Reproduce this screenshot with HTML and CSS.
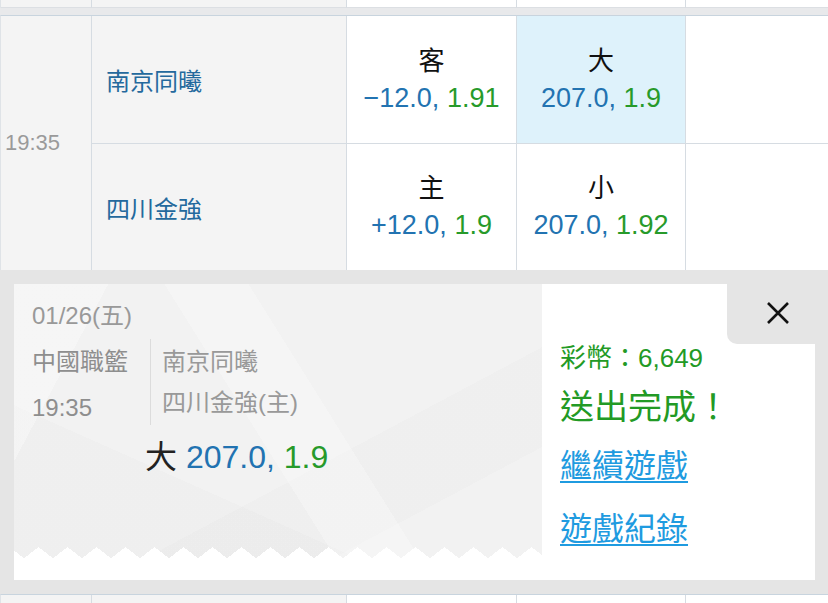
FILE: index.html
```html
<!DOCTYPE html>
<html lang="zh-Hant">
<head>
    <meta charset="UTF-8">
    <meta name="viewport" content="width=device-width, initial-scale=1.0">
    <title>投注完成</title>
    <link rel="stylesheet" href="styles.css">
</head>
<body>
    <div class="board">
        <div class="match match-edge">
            <div class="cell shade"></div>
            <div class="cell shade"></div>
            <div class="cell"></div>
            <div class="cell"></div>
            <div class="cell last"></div>
        </div>

        <div class="match">
            <div class="cell shade time">19:35</div>
            <div class="cell shade team top">南京同曦</div>
            <div class="cell odds top">
                <span class="pick">客</span>
                <span><span class="line">−12.0,</span> <span class="price">1.91</span></span>
            </div>
            <div class="cell odds top picked">
                <span class="pick">大</span>
                <span><span class="line">207.0,</span> <span class="price">1.9</span></span>
            </div>
            <div class="cell last top"></div>

            <div class="cell shade team">四川金強</div>
            <div class="cell odds">
                <span class="pick">主</span>
                <span><span class="line">+12.0,</span> <span class="price">1.9</span></span>
            </div>
            <div class="cell odds">
                <span class="pick">小</span>
                <span><span class="line">207.0,</span> <span class="price">1.92</span></span>
            </div>
            <div class="cell last"></div>
        </div>

        <div class="receipt-wrap">
            <div class="receipt">
                <div class="ticket">
                    <div class="ticket-body">
                        <div class="ticket-date">01/26(五)</div>
                        <div class="ticket-info">
                            <div class="ticket-meta">
                                <div>中國職籃</div>
                                <div>19:35</div>
                            </div>
                            <div class="ticket-teams">
                                <div>南京同曦</div>
                                <div>四川金強(主)</div>
                            </div>
                        </div>
                        <div class="ticket-bet">大 <span class="line">207.0,</span> <span class="price">1.9</span></div>
                    </div>
                </div>

                <div class="result">
                    <div class="balance">彩幣：6,649</div>
                    <div class="done">送出完成！</div>
                    <a href="#" class="result-link">繼續遊戲</a>
                    <a href="#" class="result-link">遊戲紀錄</a>
                </div>

                <button class="close" aria-label="關閉">
                    <svg width="24" height="24" viewBox="0 0 24 24">
                        <path d="M2 2 L22 22 M22 2 L2 22" stroke="#111" stroke-width="2.6" fill="none"/>
                    </svg>
                </button>
            </div>
        </div>

        <div class="match match-edge match-next">
            <div class="cell shade"></div>
            <div class="cell shade"></div>
            <div class="cell"></div>
            <div class="cell"></div>
            <div class="cell last"></div>
        </div>
    </div>
</body>
</html>
```

FILE: styles.css
```css
* {
    box-sizing: border-box;
}

html, body {
    margin: 0;
    padding: 0;
    height: 100%;
    overflow: hidden;
}

body {
    background: #e8e9eb;
    font-family: "Liberation Sans", "Noto Sans CJK TC", sans-serif;
    color: #222;
}

/* MATCH TABLE */
.match {
    display: grid;
    grid-template-columns: 91px 255px 170px 169px 1fr;
    grid-template-rows: 128px 126px;
    background: #fff;
    border-top: 1px solid #c8d4de;
    border-left: 1px solid #dfe3e7;
}

.match-edge {
    grid-template-rows: 8px;
    border-top: none;
    margin-bottom: 7px;
}

.match-edge .cell {
    border-bottom: 1px solid #dcdfe3;
}

.match-next {
    grid-template-rows: 20px;
    border-top: 1px solid #c8d4de;
    margin-bottom: 0;
}

.cell {
    border-right: 1px solid #d6dce2;
    background: #fff;
}

.cell.top {
    border-bottom: 1px solid #d6dce2;
}

.cell.last {
    border-right: none;
}

.cell.shade {
    background: #f4f4f4;
}

.time {
    grid-row: span 2;
    display: flex;
    align-items: center;
    padding-left: 4px;
    font-size: 22px;
    color: #9a9a9a;
}

.team {
    display: flex;
    align-items: center;
    padding-left: 14px;
    font-size: 24px;
    color: #24699d;
}

.odds {
    display: flex;
    flex-direction: column;
    align-items: center;
    justify-content: center;
    line-height: 37px;
    font-size: 27px;
}

.odds .pick {
    font-size: 26px;
    color: #111;
}

.odds.picked {
    background: #def2fb;
}

.line {
    color: #2273b1;
}

.price {
    color: #279a2a;
}

/* RECEIPT */
.receipt-wrap {
    background: #e5e5e5;
    padding: 14px 13px 14px 14px;
}

.receipt {
    position: relative;
    display: flex;
    height: 296px;
    background: #fff;
}

.ticket {
    width: 528px;
}

.ticket-body {
    position: relative;
    height: 274px;
    padding: 16px 18px 0;
    color: #999;
    font-size: 24px;
    background:
        linear-gradient(118deg, rgba(255, 255, 255, 0.3) 0 14%, transparent 14%),
        linear-gradient(58deg, transparent 0 46%, rgba(255, 255, 255, 0.25) 46% 58%, transparent 58%),
        linear-gradient(152deg, transparent 0 62%, rgba(0, 0, 0, 0.012) 62% 80%, transparent 80%),
        linear-gradient(24deg, rgba(0, 0, 0, 0.01) 0 30%, transparent 30%),
        #f2f2f2;
}

.ticket-body::after {
    content: "";
    position: absolute;
    left: 0;
    right: 0;
    bottom: 0;
    height: 11px;
    background: conic-gradient(from 128deg at 50% 0, #fff 104deg, transparent 0) 10px 0 / 29px 11px repeat-x;
}

.ticket-date {
    line-height: 32px;
}

.ticket-info {
    display: flex;
    margin-top: 7px;
}

.ticket-meta {
    width: 118px;
    line-height: 46px;
    color: #8e8e8e;
}

.ticket-teams {
    align-self: flex-start;
    border-left: 1px solid #dcdcdc;
    padding: 2px 0 2px 11px;
    line-height: 41px;
}

.ticket-bet {
    margin: 6px 0 0 113px;
    line-height: 40px;
    font-size: 32px;
    color: #222;
}

.result {
    flex: 1;
    padding: 56px 0 0 18px;
}

.balance {
    line-height: 36px;
    font-size: 26px;
    color: #229a25;
}

.done {
    margin-top: 9px;
    line-height: 44px;
    font-size: 34px;
    color: #229a25;
}

.result-link {
    display: block;
    width: fit-content;
    line-height: 63px;
    font-size: 32px;
    color: #1f9be0;
    text-decoration-thickness: 2px;
    text-underline-offset: 4px;
}

.done + .result-link {
    margin-top: 6px;
}

.close {
    position: absolute;
    top: -14px;
    right: -13px;
    width: 101px;
    height: 74px;
    padding: 12px 0 0;
    border: none;
    border-bottom-left-radius: 10px;
    background: #e5e5e5;
    display: flex;
    align-items: center;
    justify-content: center;
    cursor: pointer;
}
```
